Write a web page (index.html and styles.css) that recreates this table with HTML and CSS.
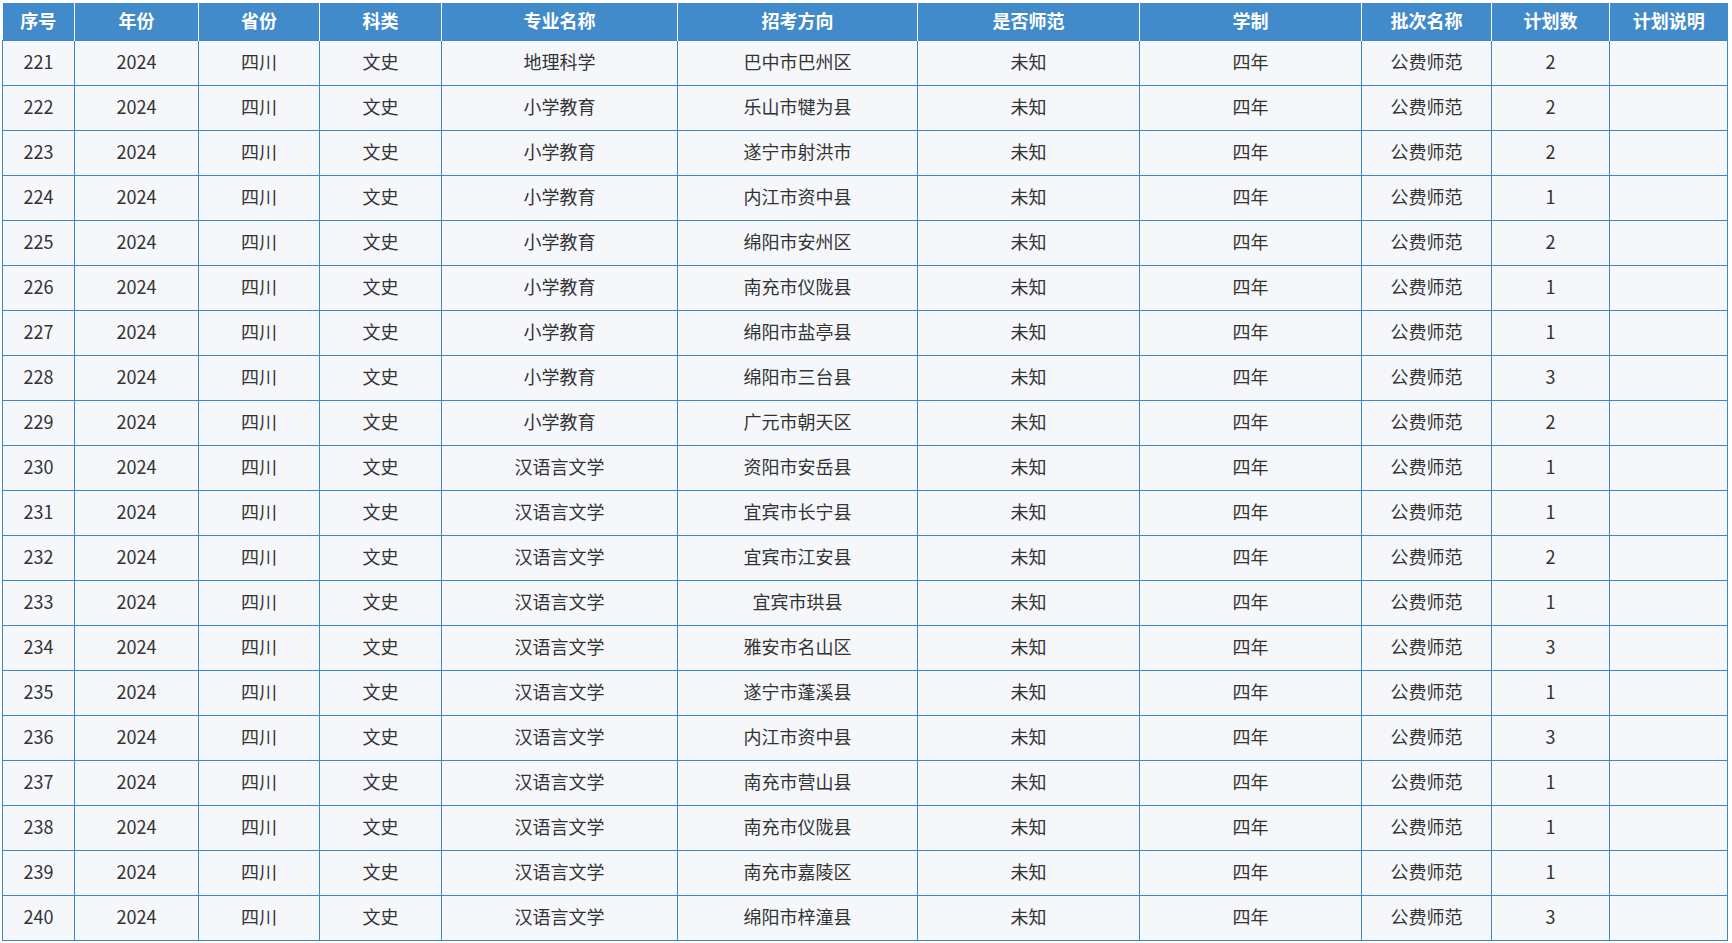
FILE: index.html
```html
<!DOCTYPE html>
<html lang="zh-CN">
<head>
<meta charset="utf-8">
<title>招生计划</title>
<link rel="stylesheet" href="styles.css">
</head>
<body>
<table class="plan">
<colgroup>
<col class="c1"><col class="c2"><col class="c3"><col class="c4"><col class="c5"><col class="c6"><col class="c7"><col class="c8"><col class="c9"><col class="c10"><col class="c11">
</colgroup>
<thead>
<tr><th>序号</th><th>年份</th><th>省份</th><th>科类</th><th>专业名称</th><th>招考方向</th><th>是否师范</th><th>学制</th><th>批次名称</th><th>计划数</th><th>计划说明</th></tr>
</thead>
<tbody>
<tr><td>221</td><td>2024</td><td>四川</td><td>文史</td><td>地理科学</td><td>巴中市巴州区</td><td>未知</td><td>四年</td><td>公费师范</td><td>2</td><td></td></tr>
<tr><td>222</td><td>2024</td><td>四川</td><td>文史</td><td>小学教育</td><td>乐山市犍为县</td><td>未知</td><td>四年</td><td>公费师范</td><td>2</td><td></td></tr>
<tr><td>223</td><td>2024</td><td>四川</td><td>文史</td><td>小学教育</td><td>遂宁市射洪市</td><td>未知</td><td>四年</td><td>公费师范</td><td>2</td><td></td></tr>
<tr><td>224</td><td>2024</td><td>四川</td><td>文史</td><td>小学教育</td><td>内江市资中县</td><td>未知</td><td>四年</td><td>公费师范</td><td>1</td><td></td></tr>
<tr><td>225</td><td>2024</td><td>四川</td><td>文史</td><td>小学教育</td><td>绵阳市安州区</td><td>未知</td><td>四年</td><td>公费师范</td><td>2</td><td></td></tr>
<tr><td>226</td><td>2024</td><td>四川</td><td>文史</td><td>小学教育</td><td>南充市仪陇县</td><td>未知</td><td>四年</td><td>公费师范</td><td>1</td><td></td></tr>
<tr><td>227</td><td>2024</td><td>四川</td><td>文史</td><td>小学教育</td><td>绵阳市盐亭县</td><td>未知</td><td>四年</td><td>公费师范</td><td>1</td><td></td></tr>
<tr><td>228</td><td>2024</td><td>四川</td><td>文史</td><td>小学教育</td><td>绵阳市三台县</td><td>未知</td><td>四年</td><td>公费师范</td><td>3</td><td></td></tr>
<tr><td>229</td><td>2024</td><td>四川</td><td>文史</td><td>小学教育</td><td>广元市朝天区</td><td>未知</td><td>四年</td><td>公费师范</td><td>2</td><td></td></tr>
<tr><td>230</td><td>2024</td><td>四川</td><td>文史</td><td>汉语言文学</td><td>资阳市安岳县</td><td>未知</td><td>四年</td><td>公费师范</td><td>1</td><td></td></tr>
<tr><td>231</td><td>2024</td><td>四川</td><td>文史</td><td>汉语言文学</td><td>宜宾市长宁县</td><td>未知</td><td>四年</td><td>公费师范</td><td>1</td><td></td></tr>
<tr><td>232</td><td>2024</td><td>四川</td><td>文史</td><td>汉语言文学</td><td>宜宾市江安县</td><td>未知</td><td>四年</td><td>公费师范</td><td>2</td><td></td></tr>
<tr><td>233</td><td>2024</td><td>四川</td><td>文史</td><td>汉语言文学</td><td>宜宾市珙县</td><td>未知</td><td>四年</td><td>公费师范</td><td>1</td><td></td></tr>
<tr><td>234</td><td>2024</td><td>四川</td><td>文史</td><td>汉语言文学</td><td>雅安市名山区</td><td>未知</td><td>四年</td><td>公费师范</td><td>3</td><td></td></tr>
<tr><td>235</td><td>2024</td><td>四川</td><td>文史</td><td>汉语言文学</td><td>遂宁市蓬溪县</td><td>未知</td><td>四年</td><td>公费师范</td><td>1</td><td></td></tr>
<tr><td>236</td><td>2024</td><td>四川</td><td>文史</td><td>汉语言文学</td><td>内江市资中县</td><td>未知</td><td>四年</td><td>公费师范</td><td>3</td><td></td></tr>
<tr><td>237</td><td>2024</td><td>四川</td><td>文史</td><td>汉语言文学</td><td>南充市营山县</td><td>未知</td><td>四年</td><td>公费师范</td><td>1</td><td></td></tr>
<tr><td>238</td><td>2024</td><td>四川</td><td>文史</td><td>汉语言文学</td><td>南充市仪陇县</td><td>未知</td><td>四年</td><td>公费师范</td><td>1</td><td></td></tr>
<tr><td>239</td><td>2024</td><td>四川</td><td>文史</td><td>汉语言文学</td><td>南充市嘉陵区</td><td>未知</td><td>四年</td><td>公费师范</td><td>1</td><td></td></tr>
<tr><td>240</td><td>2024</td><td>四川</td><td>文史</td><td>汉语言文学</td><td>绵阳市梓潼县</td><td>未知</td><td>四年</td><td>公费师范</td><td>3</td><td></td></tr>
</tbody>
</table>
</body>
</html>
```
FILE: styles.css
```css
html, body {
  margin: 0;
  padding: 0;
  background: #ffffff;
}
body {
  padding: 3px 0 0 2px;
  font-family: "Noto Sans CJK SC", "Noto Sans", sans-serif;
}
.plan {
  border-collapse: collapse;
  table-layout: fixed;
  width: 1726px;
  font-size: 18px;
}
.c1 { width: 72px; }
.c2 { width: 124px; }
.c3 { width: 121px; }
.c4 { width: 122px; }
.c5 { width: 236px; }
.c6 { width: 240px; }
.c7 { width: 222px; }
.c8 { width: 222px; }
.c9 { width: 130px; }
.c10 { width: 118px; }
.c11 { width: 118px; }
.plan th {
  background: #428bca;
  color: #ffffff;
  font-weight: bold;
  height: 34px;
  padding: 0 0 3px 0;
  line-height: 20px;
  text-align: center;
  vertical-align: middle;
  border-left: 1px solid #ffffff;
  border-right: 1px solid #ffffff;
  border-top: none;
  border-bottom: none;
}
.plan th:first-child { border-left: none; }
.plan th:last-child { border-right: none; }
.plan td {
  background: #f5f7fb;
  color: #333333;
  height: 40px;
  padding: 0 0 4px 0;
  line-height: 20px;
  text-align: center;
  vertical-align: middle;
  border: 1px solid #3d87c8;
}
```
